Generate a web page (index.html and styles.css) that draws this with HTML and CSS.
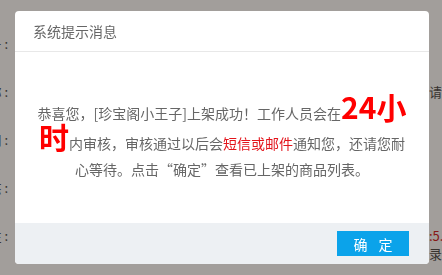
FILE: index.html
```html
<!DOCTYPE html>
<html lang="zh-CN">
<head>
    <meta charset="UTF-8">
    <meta name="viewport" content="width=device-width, initial-scale=1.0">
    <title>系统提示消息</title>
    <link rel="stylesheet" href="styles.css">
</head>
<body>
    <div class="page">
        <div class="side left">
            <div class="row">账号 :</div>
            <div class="row">名称 :</div>
            <div class="row">时间 :</div>
            <div class="row">状态 :</div>
            <div class="row">备注 :</div>
        </div>
        <div class="side right">
            <div class="row"></div>
            <div class="row">请通过</div>
            <div class="row"></div>
            <div class="row"></div>
            <div class="row"><span class="red">:5.0</span><br>录中</div>
        </div>
    </div>

    <div class="mask"></div>

    <div class="dialog">
        <div class="dialog-head">系统提示消息</div>
        <div class="dialog-body">
            <p>恭喜您，[珍宝阁小王子]上架成功！工作人员会在<span class="big">24小时</span>内审核，审核通过以后会<span class="warn">短信或邮件</span>通知您，还请您耐心等待。点击“确定”查看已上架的商品列表。</p>
        </div>
        <div class="dialog-foot">
            <button class="btn-ok">确 定</button>
        </div>
    </div>
</body>
</html>
```

FILE: styles.css
```css
body {
    margin: 0;
    font-family: "Noto Sans CJK SC", "Noto Sans", sans-serif;
    background-color: #fff;
    overflow: hidden;
}

.page {
    display: flex;
    justify-content: space-between;
    height: 275px;
    padding-top: 35px;
    box-sizing: border-box;
    font-size: 13px;
    color: #333;
}

.side {
    width: 12px;
    overflow: hidden;
}

.side .row {
    display: flex;
    height: 48px;
    white-space: nowrap;
    line-height: 18px;
}

.left .row {
    justify-content: flex-end;
    padding-right: 4px;
}

.right {
    width: 13px;
}

.right .row {
    display: block;
}

.red {
    color: #c00;
}

.mask {
    position: fixed;
    top: 0;
    left: 0;
    right: 0;
    bottom: 0;
    background: rgba(60, 52, 45, 0.48);
}

.dialog {
    position: absolute;
    top: 11px;
    left: 15px;
    width: 414px;
    background: #fff;
    border-radius: 4px;
    overflow: hidden;
}

.dialog-head {
    height: 40px;
    line-height: 40px;
    padding-left: 18px;
    font-size: 14px;
    color: #666;
    border-bottom: 1px solid #e8e8e8;
}

.dialog-body {
    height: 171px;
    padding: 44px 20px 0;
    box-sizing: border-box;
}

.dialog-body p {
    margin: 0;
    text-align: center;
    font-size: 14px;
    line-height: 26px;
    color: #666;
}

.big {
    font-size: 30px;
    font-weight: bold;
    color: #f00;
    line-height: 20px;
}

.warn {
    color: #e3141b;
}

.dialog-foot {
    display: flex;
    justify-content: flex-end;
    align-items: center;
    height: 41px;
    padding-right: 20px;
    background: #edf0f3;
}

.btn-ok {
    width: 72px;
    height: 25px;
    border: none;
    background: #0ba3ea;
    color: #fff;
    font-family: inherit;
    font-size: 14px;
    letter-spacing: 4px;
    padding: 0 0 0 4px;
    cursor: pointer;
}
```
